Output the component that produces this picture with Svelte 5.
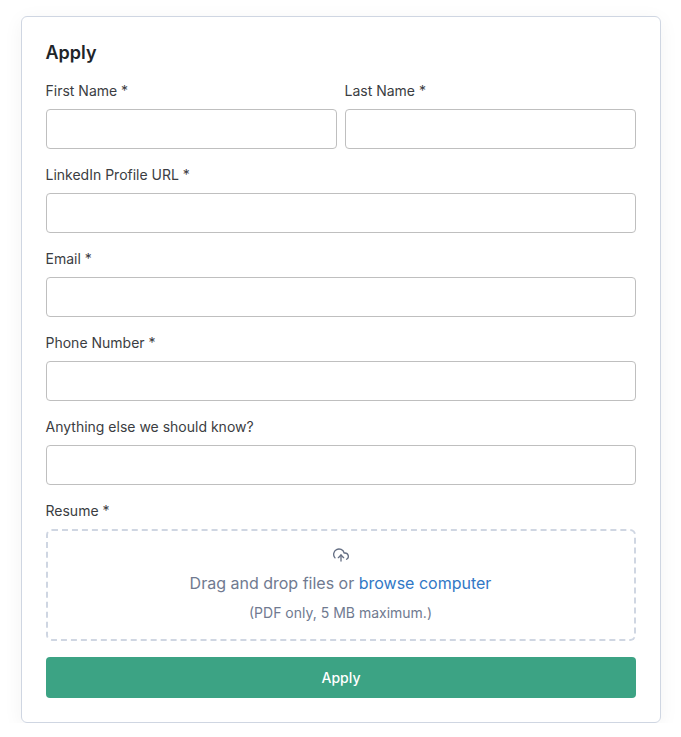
<script>
	const fields = [
		{ id: 'linkedin', label: 'LinkedIn Profile URL *', type: 'url' },
		{ id: 'email', label: 'Email *', type: 'email' },
		{ id: 'phone', label: 'Phone Number *', type: 'tel' },
		{ id: 'notes', label: 'Anything else we should know?', type: 'text' }
	];

	let values = $state({});

	function submit(e) {
		e.preventDefault();
	}
</script>

<form class="card" onsubmit={submit}>
	<h2>Apply</h2>
	<div class="row">
		<div class="field">
			<label for="first">First Name *</label>
			<input id="first" type="text" bind:value={values.first} />
		</div>
		<div class="field">
			<label for="last">Last Name *</label>
			<input id="last" type="text" bind:value={values.last} />
		</div>
	</div>
	{#each fields as field}
		<div class="field">
			<label for={field.id}>{field.label}</label>
			<input id={field.id} type={field.type} bind:value={values[field.id]} />
		</div>
	{/each}
	<div class="field">
		<label for="resume">Resume *</label>
		<label class="dropzone" for="resume">
			<svg width="16" height="16" viewBox="0 0 24 24" fill="none" stroke="currentColor" stroke-width="2" stroke-linecap="round" stroke-linejoin="round">
				<polyline points="16 16 12 12 8 16" />
				<line x1="12" y1="12" x2="12" y2="21" />
				<path d="M20.39 18.39A5 5 0 0 0 18 9h-1.26A8 8 0 1 0 3 16.3" />
			</svg>
			<span class="prompt">Drag and drop files or <span class="browse">browse computer</span></span>
			<span class="hint">(PDF only, 5 MB maximum.)</span>
		</label>
		<input id="resume" type="file" accept=".pdf" hidden />
	</div>
	<button type="submit">Apply</button>
</form>

<style>
	:global(body) {
		background: #fff;
	}

	.card {
		box-sizing: border-box;
		width: 640px;
		height: 707px;
		margin: 16px 20px 0 20.5px;
		padding: 24px;
		border: 1px solid #cfd6e2;
		border-radius: 6px;
		box-shadow: 0 4px 20px rgba(0, 0, 0, 0.05);
		font-family: Inter, sans-serif;
		color: #212429;
	}

	h2 {
		margin: 0 0 16px;
		font-size: 18px;
		line-height: 24px;
		font-weight: 600;
	}

	.row {
		display: flex;
		gap: 8px;
	}

	.field {
		flex: 1;
		margin-bottom: 16px;
	}

	.field > label:first-child {
		display: block;
		height: 20px;
		margin-bottom: 8px;
		font-size: 14px;
		line-height: 20px;
		color: #3b3d42;
	}

	input {
		display: block;
		box-sizing: border-box;
		width: 100%;
		height: 40px;
		padding: 0 12px;
		border: 1px solid #bfbfbf;
		border-radius: 4px;
		background: #fff;
		font: inherit;
		outline: none;
	}

	input[hidden] {
		display: none;
	}

	.dropzone {
		box-sizing: border-box;
		height: 112px;
		padding-top: 16px;
		border: 2px dashed #cfd6e2;
		border-radius: 6px;
		display: flex;
		flex-direction: column;
		align-items: center;
		color: #707a90;
		cursor: pointer;
	}

	.dropzone svg {
		color: #667085;
	}

	.prompt {
		margin-top: 8px;
		font-size: 16px;
		line-height: 24px;
	}

	.browse {
		color: #3178c6;
	}

	.hint {
		margin-top: 8px;
		font-size: 14px;
		line-height: 20px;
	}

	button {
		display: block;
		width: 100%;
		height: 41px;
		padding: 0 0 0 1px;
		border: 0;
		border-radius: 4px;
		background: #3ca384;
		color: #fff;
		font: 500 14px/20px Inter, sans-serif;
		cursor: pointer;
	}
</style>
